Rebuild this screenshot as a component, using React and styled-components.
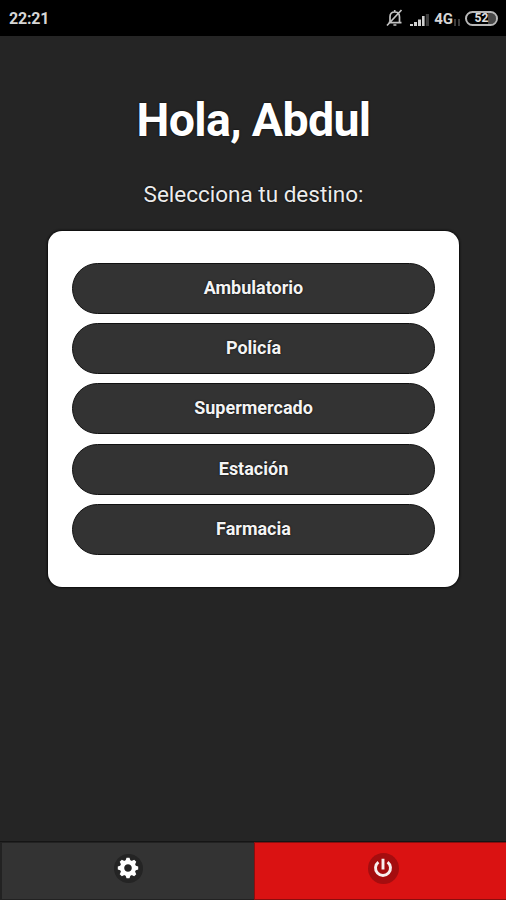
import React from "react";
import styled, { createGlobalStyle } from "styled-components";

const GlobalStyle = createGlobalStyle`
  * {
    box-sizing:border-box;
  }
  body {
    margin:0;
    background:#252525;
    font-family:Roboto, sans-serif;
  }
`;

const Screen = styled.div`
  display:flex;
  flex-direction:column;
  width:100%;
  height:100vh;
  overflow:hidden;
  background:#252525;
`;

const StatusBar = styled.header`
  display:flex;
  flex:none;
  justify-content:space-between;
  align-items:center;
  height:36px;
  padding:0 8px 0 9px;
  background:#000000;
`;

const Clock = styled.span`
  font-size:16px;
  line-height:20px;
  font-weight:700;
  letter-spacing:-0.2px;
  color:#d6d6d6;
  padding-top:2px;
`;

const StatusIcons = styled.div`
  display:flex;
  align-items:center;
`;

const SignalGroup = styled.div`
  display:flex;
  align-items:flex-end;
  gap:1px;
  margin-left:6px;
  padding-top:2px;
`;

const Network = styled.span`
  margin-left:3px;
  font-size:15px;
  line-height:15px;
  font-weight:700;
  color:#d6d6d6;
`;

const Battery = styled.div`
  display:flex;
  justify-content:center;
  align-items:center;
  width:33px;
  height:15px;
  margin-left:5px;
  border:2px solid #b8b8b8;
  border-radius:8px;
  background:linear-gradient(90deg, #000000 72%, #484848 72%) padding-box;
  font-size:12px;
  line-height:12px;
  font-weight:700;
  color:#e0e0e0;
`;

const Content = styled.main`
  display:flex;
  flex:1;
  flex-direction:column;
  align-items:center;
`;

const Title = styled.h1`
  margin:56px 0 0 1px;
  font-size:46.5px;
  line-height:56px;
  font-weight:700;
  letter-spacing:-0.65px;
  color:#ffffff;
  text-shadow:0 0 2px #000000;
`;

const Subtitle = styled.p`
  margin:32px 0 0 1px;
  font-size:22.5px;
  line-height:28px;
  color:#ececec;
  text-shadow:0 0 2px #000000;
`;

const Card = styled.section`
  display:flex;
  flex-direction:column;
  gap:9.2px;
  width:411px;
  height:356px;
  margin:23px 0 0 1px;
  padding:32px 24px;
  border-radius:14px;
  background:#ffffff;
  box-shadow:0 0 2px 1px #0c0c0c;
`;

const DestinationButton = styled.button`
  flex:none;
  height:51px;
  padding:0 0 2px;
  border:1px solid #111111;
  border-radius:26px;
  background:#333333;
  font-family:inherit;
  font-size:18px;
  font-weight:700;
  color:#f4f4f4;
  text-shadow:0 0 2px #000000;
`;

const BottomBar = styled.footer`
  display:flex;
  flex:none;
  height:59px;
  border-top:1px solid #151515;
`;

const BarButton = styled.button`
  display:flex;
  flex:${props=>props.grow};
  justify-content:center;
  align-items:center;
  padding:0 0 6px ${props=>props.shift || 0}px;
  border:1px solid ${props=>props.edge};
  border-left-width:${props=>props.leftEdge}px;
  border-right-width:0;
  background:${props=>props.color};
`;

const IconDisc = styled.span`
  display:flex;
  justify-content:center;
  align-items:center;
  width:${props=>props.size}px;
  height:${props=>props.size}px;
  border-radius:50%;
  background:${props=>props.color};
`;

const destinations = ["Ambulatorio", "Policía", "Supermercado", "Estación", "Farmacia"];

function BellOffIcon() {
  return (
    <svg width="17" height="18" viewBox="0 0 17 18" fill="none" stroke="#c4c4c4" strokeWidth="1.7">
      <path d="M4 13V8c0-3 1.7-5 4.7-5s4.8 2 4.8 5v5M2.5 13.7h13M7.4 16h3M8.7 1v2M1 16.5 15.5 1" />
    </svg>
  );
}

function SignalIcon() {
  return (
    <svg width="21" height="15" viewBox="0 0 21 15">
      <path d="M1 14v-2h3v2zM5 14v-4h3v4zM9 14V7.5h3V14zM13 14V4h2.6v10z" fill="#d0d0d0" />
      <path d="M16.8 14V2H20v12z" fill="#3c3c3c" />
    </svg>
  );
}

function DataIcon() {
  return (
    <svg width="6" height="8" viewBox="0 0 6 8">
      <path d="M0 0h2v7H0zM4 0h2v7H4z" fill="#3c3c3c" />
    </svg>
  );
}

function GearIcon() {
  const teeth = [0, 45, 90, 135, 180, 225, 270, 315];
  return (
    <svg width="22" height="22" viewBox="-11 -11 22 22">
      <circle r="5.9" fill="none" stroke="#ffffff" strokeWidth="4.2" />
      {teeth.map(angle => (
        <path key={angle} d="M-2.6-7-1.5-10.2H1.5L2.6-7z" fill="#ffffff" transform={`rotate(${angle})`} />
      ))}
    </svg>
  );
}

function PowerIcon() {
  return (
    <svg width="22" height="22" viewBox="-11 -11 22 22" fill="none" stroke="#f8eeee" strokeWidth="2.9">
      <path d="M-4.6-5.9A7.5 7.5 0 1 0 4.6-5.9M0-9.3V1.5" />
    </svg>
  );
}

export default function App() {
  return (
    <>
      <GlobalStyle />
      <Screen>
        <StatusBar>
          <Clock>22:21</Clock>
          <StatusIcons>
            <BellOffIcon />
            <SignalGroup>
              <SignalIcon />
              <Network>4G</Network>
              <DataIcon />
            </SignalGroup>
            <Battery>52</Battery>
          </StatusIcons>
        </StatusBar>
        <Content>
          <Title>Hola, Abdul</Title>
          <Subtitle>Selecciona tu destino:</Subtitle>
          <Card>
            {destinations.map(name => (
              <DestinationButton key={name}>{name}</DestinationButton>
            ))}
          </Card>
        </Content>
        <BottomBar>
          <BarButton grow="0 0 254px" color="#333333" edge="#222222" leftEdge={2} aria-label="Ajustes">
            <IconDisc color="#242424" size={29}><GearIcon /></IconDisc>
          </BarButton>
          <BarButton grow="1" color="#da1212" edge="#8a0e0e" leftEdge={1} shift={5} aria-label="Salir">
            <IconDisc color="#a50d0f" size={31}><PowerIcon /></IconDisc>
          </BarButton>
        </BottomBar>
      </Screen>
    </>
  );
}
